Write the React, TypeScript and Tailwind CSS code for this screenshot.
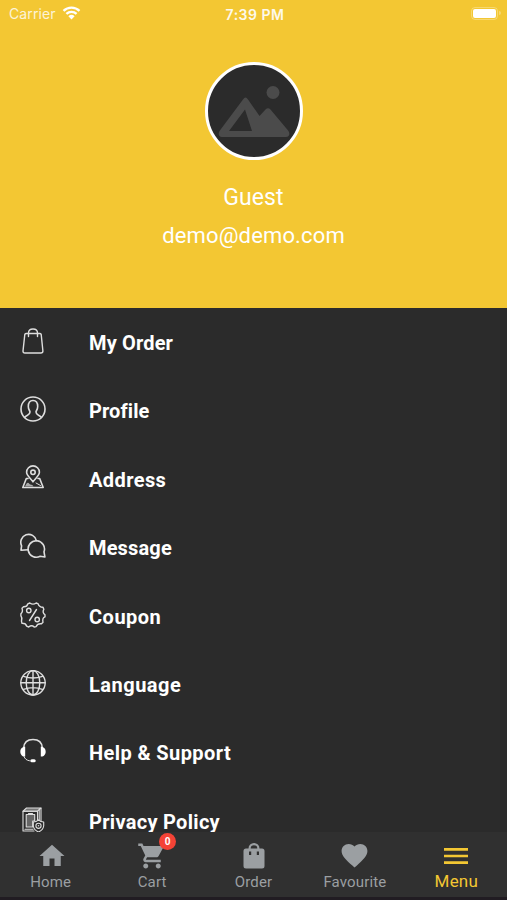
import type { ReactNode } from "react";
import { MdFavorite, MdHome, MdMenu, MdShoppingCart } from "react-icons/md";

function StatusBar() {
  return (
    <div className="flex h-7 items-center text-white">
      <div className="flex flex-1 items-center gap-[6px] pl-[9px]">
        <span className="font-['Inter'] text-[14px] leading-5 tracking-[0.1px] opacity-80">Carrier</span>
        <svg className="-mt-[2px]" width="19" height="14" viewBox="0 0 18 14" fill="none" stroke="currentColor" strokeWidth="2.3">
          <path d="M1 4.8a11.5 11.5 0 0 1 16 0M3.9 7.9a7.3 7.3 0 0 1 10.2 0" />
          <path d="M5.9 10.2a4.5 4.5 0 0 1 6.2 0L9 13.5z" fill="currentColor" stroke="none" />
        </svg>
      </div>
      <span className="font-['Inter'] text-[14px] font-semibold tracking-[0.5px] opacity-90">7:39 PM</span>
      <div className="-mt-[2px] flex flex-1 items-center justify-end pr-[6px]">
        <div className="rounded-[4px] border border-white/30 p-px">
          <div className="h-[9px] w-[23px] rounded-[2px] bg-white" />
        </div>
        <div className="ml-px h-1 w-[2px] rounded-r bg-white/30" />
      </div>
    </div>
  );
}

function Avatar() {
  return (
    <div className="grid h-[98px] w-[98px] place-items-center rounded-full border-[3px] border-white bg-[#2b2b2b]">
      <svg width="92" height="92" viewBox="0 0 92 92" fill="#4b4b4b">
        <circle cx="65" cy="27.5" r="6.5" />
        <path
          d="M35 34.5q2.500-4 5 0L51.500 51l6-6.500q2.500-2.500 5 0L80.500 66q2.500 5-2.500 6H14q-5-1-2.500-6zM37 44.500 21 66h23z"
          fillRule="evenodd"
        />
      </svg>
    </div>
  );
}

function Icon({ children, width = 1.4 }: { children: ReactNode; width?: number }) {
  return (
    <svg width="26" height="26" viewBox="0 0 26 26" fill="none" stroke="#dedede" strokeWidth={width} strokeLinecap="round" strokeLinejoin="round">
      {children}
    </svg>
  );
}

const items = [
  {
    label: "My Order",
    cls: "tracking-[0.15px]",
    icon: (
      <Icon>
        <path d="M6 5.500h14q1 0 1.200 1l1.700 16.500q0 2-2 2H5q-2 0-2-2L4.800 6.500q.2-1 1.200-1z" />
        <path d="M8.500 8.500V5q0-4 4.500-4t4.500 4v3.500" />
      </Icon>
    ),
  },
  {
    label: "Profile",
    cls: "tracking-[0.1px]",
    icon: (
      <Icon width={1.6}>
        <circle cx="13" cy="13" r="12" />
        <path d="M4.500 21.500c2-3 5.500-2 5.500-5.500 0-1.300-1.700-2.200-1.700-5.500 0-4 1.700-6 4.700-6s4.700 2 4.700 6c0 3.300-1.700 4.200-1.700 5.500 0 3.500 3.500 2.500 5.500 5.500" />
      </Icon>
    ),
  },
  {
    label: "Address",
    cls: "tracking-[0.4px]",
    icon: (
      <Icon width={1.6}>
        <path d="M13 16.800C10 12.500 6.600 10.500 6.600 7.300a6.400 6.400 0 0 1 12.800 0c0 3.200-3.400 5.200-6.400 9.500z" />
        <circle cx="13" cy="7.300" r="2.200" />
        <path d="M8 13.500H6.300L2.800 22.500h20.400l-3.500-9H18" />
        <path d="M5 21.500c1.500-4 3-5 4.500-2.500 1 1.200 3 0 4 2.500z" fill="#aaa" stroke="none" />
        <path d="m16 18 4.500 2.500" strokeWidth="1" />
      </Icon>
    ),
  },
  {
    label: "Message",
    cls: "tracking-[0.15px]",
    icon: (
      <Icon width={1.6}>
        <path d="M8.200 16.800 1 17.200l.6-4.400A7.900 7.900 0 1 1 16.400 7.600" />
        <path d="M24 18.800l.9 5.200-4.700-.8a8.200 8.200 0 1 1 3.800-4.400z" />
      </Icon>
    ),
  },
  {
    label: "Coupon",
    cls: "tracking-[0.5px]",
    icon: (
      <Icon>
        <path d="M9.800 1Q13 3.300 16.200 1l2 .8q.8 3.200 4.800 3.500l.8 2q-1.800 3 1.200 5.500v2q-3 1-2 5.500l-1.500 1.500q-4-.5-5.300 2.800l-2 .4q-2.500-2.500-5.500 0l-2-.8q-.8-3-4.700-2.900L1.500 19.300q1-3.500-.6-5.500v-2q2.400-2 1.100-5.500l1.500-1.500q3.600.2 4.300-3z" />
        <path d="m16.500 7.500-7 11" />
        <circle cx="8.800" cy="8.500" r="2.200" />
        <circle cx="17.200" cy="17.500" r="2.200" />
      </Icon>
    ),
  },
  {
    label: "Language",
    cls: "tracking-[0.5px]",
    icon: (
      <Icon width={1.4}>
        <circle cx="13" cy="12.800" r="12.200" />
        <ellipse cx="13" cy="12.800" rx="6.800" ry="12.200" />
        <path d="M13 .6V25M.8 12.800h24.400M3.500 6.300q9.500 3.300 19 0M3.500 19.300q9.500-3.300 19 0" />
      </Icon>
    ),
  },
  {
    label: "Help & Support",
    cls: "tracking-[0.4px]",
    icon: (
      <Icon width={1.6}>
        <path d="M3.700 10C4 4.500 7.500 1.500 13 1.500s9 3 9.300 8.500" />
        <path d="M5.200 8.800v9.700c-6.500.5-6.500-10 0-9.700zM20.800 8.800v9.700c6.500.5 6.500-10 0-9.700z" fill="#fff" stroke="none" />
        <path d="M4 18.500c1 2.500 2.500 3.800 5.500 4.300" strokeWidth="1" />
        <rect x="10.300" y="21.200" width="5.400" height="3" rx="1.500" fill="#fff" stroke="none" />
      </Icon>
    ),
  },
  {
    label: "Privacy Policy",
    cls: "tracking-[0.3px]",
    icon: (
      <Icon width={1.1}>
        <path d="M3 4.200 6.500 1H21l-3.500 3.200z" fill="#777" />
        <path d="M14 24H3V4.200h14.500v9M21 1v13M19.200 3v10" />
        <path d="M6.200 7.500h8.500v6.500h-2V20H6.200z" fill="#666" />
        <path d="M8.500 6.500h4M5 22.200h8" />
        <path d="M18.500 12.800q2.200 2 5.200 2.200v4q-.6 4-5.200 6-4.600-2-5.200-6v-4q3-.2 5.200-2.200z" fill="#2b2b2b" />
        <circle cx="18.500" cy="18.800" r="2.600" />
        <circle cx="18.500" cy="18.800" r=".8" fill="#dedede" stroke="none" />
      </Icon>
    ),
  },
];

function OrderBag() {
  return (
    <svg width="22" height="26" viewBox="0 0 22 26" fill="#9b9fa2">
      <path
        d="M5.500 5.500a5.500 5.500 0 0 1 11 0H19q2.500 0 2.500 2.500v15q0 2.500-2.500 2.500H3q-2.500 0-2.500-2.500V8q0-2.500 2.500-2.500zm2.200 0h6.600a3.300 3.300 0 0 0-6.600 0zM6 8.500v3.500h2.200V8.500zm7.800 0v3.500H16V8.500z"
        fillRule="evenodd"
      />
    </svg>
  );
}

function Tab({ label, children, active }: { label: string; children: ReactNode; active?: boolean }) {
  return (
    <button className="flex flex-1 flex-col items-center">
      <span className="relative mt-[9px] flex h-[29px] items-center justify-center">{children}</span>
      <span
        className={
          active
            ? "mt-px text-[17px] leading-[20px] tracking-[0.2px] text-[#f3c733]"
            : "mt-[2px] text-[15px] leading-[20px] tracking-[0.15px]"
        }
      >
        {label}
      </span>
    </button>
  );
}

export default function App() {
  return (
    <div className="flex h-[900px] w-[507px] flex-col overflow-hidden bg-[#2b2b2b] font-['Roboto',sans-serif]">
      <header className="h-[308px] shrink-0 bg-[#f3c733]">
        <StatusBar />
        <div className="flex flex-col items-center pt-[34px] text-white">
          <Avatar />
          <h1 className="mt-[23px] text-[23px] leading-[30px] tracking-[0.1px]">Guest</h1>
          <p className="mt-[8px] text-[22px] leading-[30px] tracking-[0.15px]">demo@demo.com</p>
        </div>
      </header>

      <main className="min-h-0 flex-1 overflow-hidden">
        {items.map((item) => (
          <div key={item.label} className="flex h-[68.4px] items-start pl-5">
            <span className="mt-5">{item.icon}</span>
            <span className={`ml-[43px] mt-[20px] text-[20px] font-bold leading-[30px] text-white ${item.cls}`}>{item.label}</span>
          </div>
        ))}
      </main>

      <nav className="flex h-[68px] shrink-0 border-b-[3px] border-[#211c22] bg-[#303030] text-[#9b9fa2]">
        <Tab label="Home"><MdHome className="ml-[2px]" size={30} /></Tab>
        <Tab label="Cart">
          <MdShoppingCart size={30} />
          <span className="absolute -top-[8px] left-[22px] grid h-[17px] w-[17px] place-items-center rounded-full bg-[#f44336] text-[10px] font-bold text-white">0</span>
        </Tab>
        <Tab label="Order"><OrderBag /></Tab>
        <Tab label="Favourite"><MdFavorite size={31} /></Tab>
        <Tab label="Menu" active><MdMenu size={32} color="#f3c733" /></Tab>
      </nav>
    </div>
  );
}
